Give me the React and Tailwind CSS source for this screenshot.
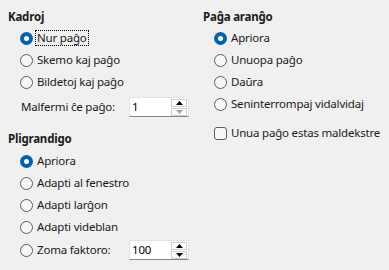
const Radio = ({ checked, label, focus }) => (
  <div className="flex items-center h-[22px] whitespace-nowrap">
    {checked ? (
      <span className="w-[13px] h-[13px] rounded-full bg-[#0063b1] flex items-center justify-center shrink-0">
        <span className="w-[5px] h-[5px] rounded-full bg-white" />
      </span>
    ) : (
      <span className="w-[13px] h-[13px] rounded-full border border-[#5c5c5c] bg-[#f7f7f7] shrink-0" />
    )}
    <span
      className={
        focus
          ? "ml-[2px] px-[1px] leading-[13px] pb-[1px] border border-dotted border-black"
          : "ml-[4px]"
      }
    >
      {label}
    </span>
  </div>
);

const Spin = ({ value, downDisabled }) => (
  <div className="flex w-[60px] h-[20px] bg-white border border-[#e3e3e3] border-b-[#868686]">
    <div className="flex-1 pl-[2px] leading-[18px] text-black">{value}</div>
    <div className="flex flex-col w-[16px] mr-[1px] mt-[1px] gap-[1px]">
      <div className="h-[9px] border border-[#cfcfcf] bg-[#fdfdfd] flex items-center justify-center">
        <svg width="7" height="4" viewBox="0 0 7 4">
          <path d="M0 4 L3.5 0 L7 4 Z" fill="#000" />
        </svg>
      </div>
      <div className="h-[8px] border border-[#cfcfcf] bg-[#fdfdfd] flex items-center justify-center">
        <svg width="7" height="4" viewBox="0 0 7 4">
          <path d="M0 0 L3.5 4 L7 0 Z" fill={downDisabled ? "#a0a0a0" : "#000"} />
        </svg>
      </div>
    </div>
  </div>
);

export default function App() {
  return (
    <div
      className="w-[389px] h-[270px] bg-[#f0f0f0] flex text-[11.5px] tracking-[-0.2px] text-[#1a1a1a]"
      style={{ fontFamily: '"Noto Sans", "Open Sans", sans-serif' }}
    >
      {/* Left column */}
      <div className="ml-[8px] w-[195px] shrink-0 pt-[9px]">
        <div className="font-bold h-[16px] leading-[16px]">Kadroj</div>
        <div className="mt-[2px] ml-[12px]">
          <Radio checked focus label="Nur paĝo" />
          <Radio label="Skemo kaj paĝo" />
          <Radio label="Bildetoj kaj paĝo" />
        </div>
        <div className="mt-[4px] ml-[13px] flex items-center h-[20px]">
          <span className="w-[108px] whitespace-nowrap">Malfermi ĉe paĝo:</span>
          <Spin value="1" downDisabled />
        </div>

        <div className="mt-[14px] font-bold h-[16px] leading-[16px]">Pligrandigo</div>
        <div className="mt-[3px] ml-[12px]">
          <Radio checked label="Apriora" />
          <Radio label="Adapti al fenestro" />
          <Radio label="Adapti larĝon" />
          <Radio label="Adapti videblan" />
        </div>
        <div className="mt-[2px] ml-[12px] flex items-center h-[20px]">
          <div className="w-[109px]">
            <Radio label="Zoma faktoro:" />
          </div>
          <Spin value="100" />
        </div>
      </div>

      {/* Right column */}
      <div className="flex-1 pt-[9px]">
        <div className="font-bold h-[16px] leading-[16px]">Paĝa aranĝo</div>
        <div className="mt-[2px] ml-[11px]">
          <Radio checked label="Apriora" />
          <Radio label="Unuopa paĝo" />
          <Radio label="Daŭra" />
          <Radio label="Seninterrompaj vidalvidaj" />
        </div>
        <div className="mt-[7px] ml-[11px] flex items-center h-[22px] whitespace-nowrap">
          <span className="w-[13px] h-[13px] rounded-[3px] border border-[#5c5c5c] bg-[#f7f7f7] shrink-0" />
          <span className="ml-[4px]">Unua paĝo estas maldekstre</span>
        </div>
      </div>
    </div>
  );
}
